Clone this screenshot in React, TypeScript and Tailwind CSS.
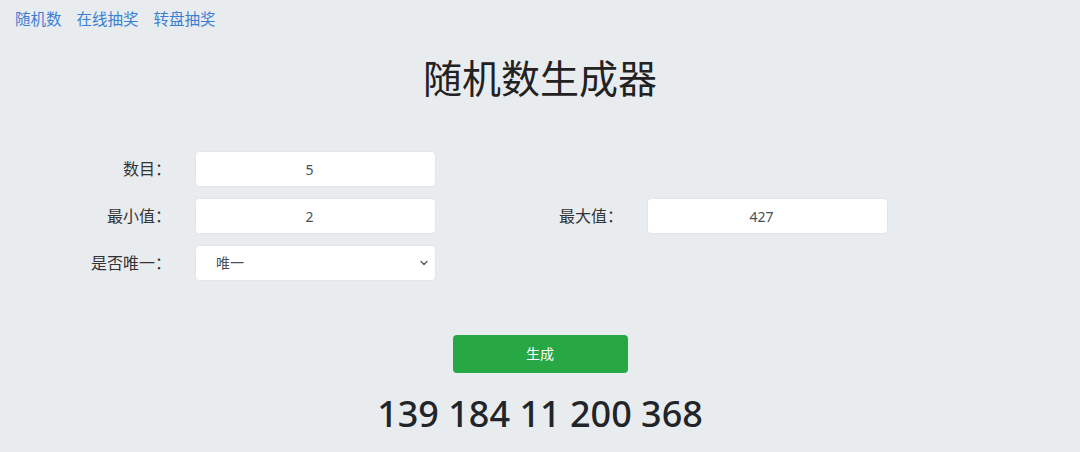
import { ChevronDown } from "lucide-react";

const font = { fontFamily: '"Noto Sans", "Noto Sans CJK SC", sans-serif' };

function Field({ value }: { value: string }) {
  return (
    <input
      readOnly
      value={value}
      className="h-9 w-[241px] rounded border border-[#e2e5e9] bg-white pr-3 text-center text-sm text-[#495057] outline-none"
    />
  );
}

function Label({ text, className }: { text: string; className: string }) {
  return <label className={`text-right text-base text-[#333] ${className}`}>{text}</label>;
}

export default function App() {
  const links = ["随机数", "在线抽奖", "转盘抽奖"];

  return (
    <div className="min-h-[452px] w-full bg-[#e9ecef]" style={font}>
      <nav className="flex h-10 items-center gap-[15px] px-[15px] text-[15.5px] text-[#3a7fd6]">
        {links.map((l) => (
          <a key={l} href="#">
            {l}
          </a>
        ))}
      </nav>

      <h1 className="mt-4 h-11 text-center text-[39px] leading-[44px] text-[#222]">随机数生成器</h1>

      <div className="mt-[51px] flex flex-col gap-[11px]">
        <div className="flex items-center">
          <Label text="数目：" className="w-[171px]" />
          <div className="ml-[24px]">
            <Field value="5" />
          </div>
        </div>
        <div className="flex items-center">
          <Label text="最小值：" className="w-[171px]" />
          <div className="ml-[24px]">
            <Field value="2" />
          </div>
          <Label text="最大值：" className="w-[187px]" />
          <div className="ml-[24px]">
            <Field value="427" />
          </div>
        </div>
        <div className="flex items-center">
          <Label text="是否唯一：" className="w-[171px]" />
          <div className="relative ml-[24px]">
            <select
              defaultValue="唯一"
              className="h-9 w-[241px] appearance-none rounded border border-[#e2e5e9] bg-white pl-5 text-sm text-[#495057] outline-none"
            >
              <option>唯一</option>
              <option>不唯一</option>
            </select>
            <ChevronDown
              size={12}
              strokeWidth={2.5}
              className="pointer-events-none absolute right-[6px] top-[12px] text-[#555]"
            />
          </div>
        </div>
      </div>

      <div className="mt-[54px] flex justify-center">
        <button className="h-[38px] w-[175px] rounded bg-[#28a745] text-sm text-white">生成</button>
      </div>

      <div className="mt-[15px] h-[51px] text-center text-[36px] font-medium leading-[51px] text-[#212529]">
        139 184 11 200 368
      </div>
    </div>
  );
}
